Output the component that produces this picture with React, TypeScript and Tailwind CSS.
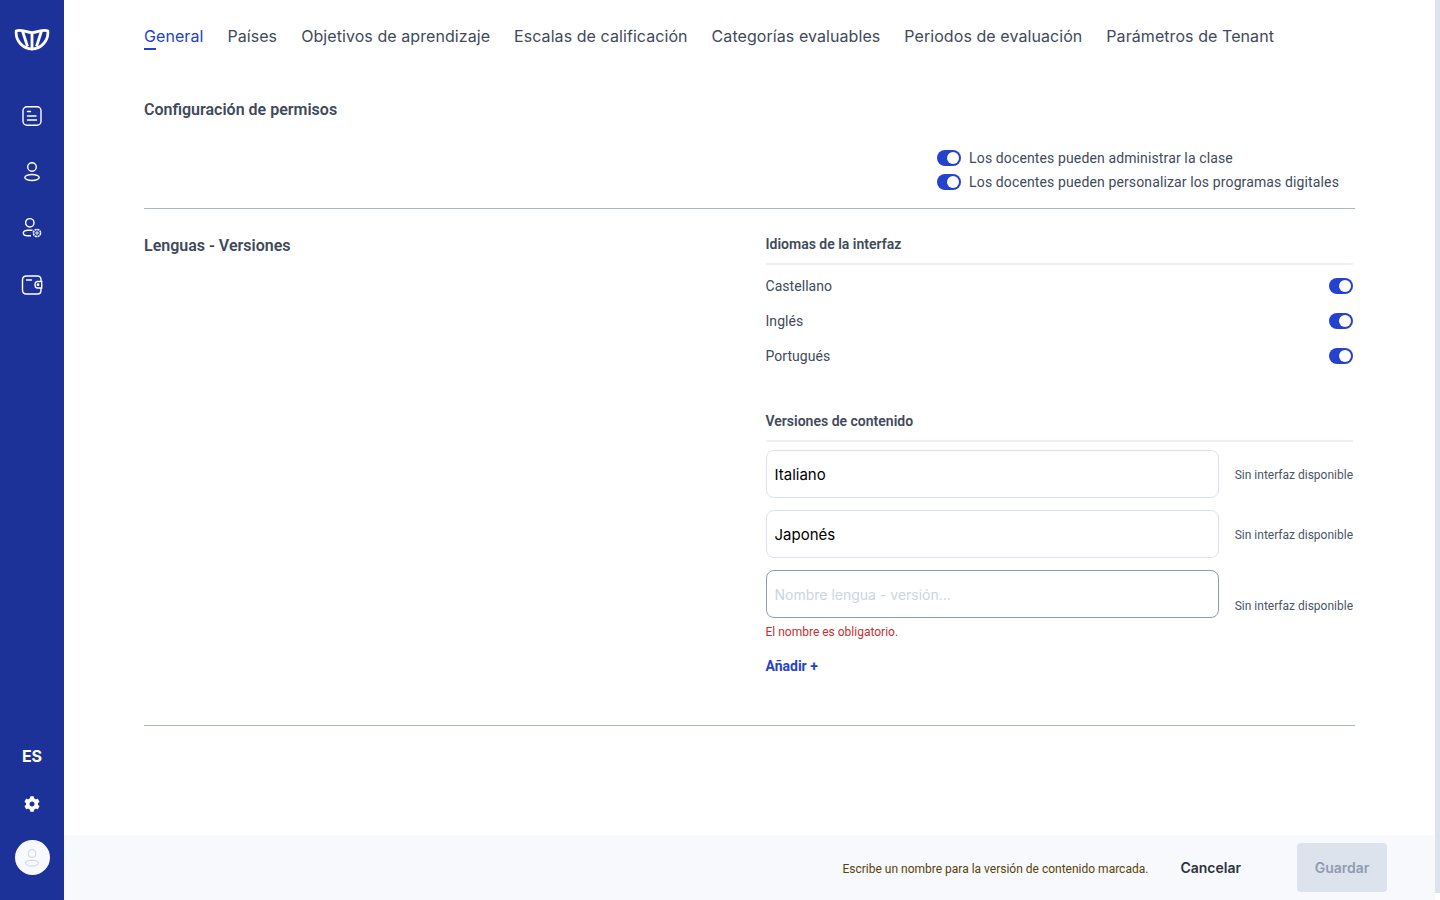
import React from "react";
import { FaCog } from "react-icons/fa";

const Toggle = () => (
  <span className="flex h-4 w-6 shrink-0 items-center justify-end rounded-full bg-[#2442cd] pr-[2px]">
    <span className="h-3 w-3 rounded-full bg-white" />
  </span>
);

const tabs = ["General", "Países", "Objetivos de aprendizaje", "Escalas de calificación", "Categorías evaluables", "Periodos de evaluación", "Parámetros de Tenant"];

const Logo = () => (
  <svg width="36" height="24" viewBox="0 0 36 24" fill="none" stroke="white" strokeWidth="2.8" strokeLinejoin="round">
    <path d="M2.3 3.8 C8 2.2 12.5 5.6 18 5.6 C23.5 5.6 28 2.2 33.7 3.8 C35 13.5 27 22 18 22 C9 22 1 13.5 2.3 3.8 Z" />
    <path d="M8.5 4 L13.5 19.5 M18 5.6 V22 M27.5 4 L22.5 19.5" />
  </svg>
);

const DocIcon = () => (
  <svg width="22" height="22" viewBox="0 0 22 22" fill="none" stroke="white" strokeWidth="1.4" strokeLinecap="round">
    <rect x="2" y="1.7" width="18" height="18.6" rx="4" />
    <path d="M6.5 6.5H9.5M6.5 11H15M6.5 15H15.5" />
  </svg>
);

const UserIcon = () => (
  <svg width="20" height="22" viewBox="0 0 20 22" fill="none" stroke="white" strokeWidth="1.4">
    <circle cx="10" cy="6" r="4.3" />
    <ellipse cx="10" cy="16.5" rx="7.2" ry="3" />
  </svg>
);

const UserGearIcon = () => (
  <svg width="22" height="22" viewBox="0 0 22 22" fill="none" stroke="white" strokeWidth="1.4">
    <circle cx="8.8" cy="5.8" r="4.2" />
    <path d="M11.5 13.2H7C4.5 13.2 2.3 14.3 2.3 16C2.3 17.7 4.5 18.8 7 18.8H10" />
    <circle cx="16" cy="16" r="3.6" strokeDasharray="2.2 0.6" strokeWidth="1.5" />
    <circle cx="16" cy="16" r="1.2" strokeWidth="1" />
  </svg>
);

const WalletIcon = () => (
  <svg className="mt-px" width="22" height="22" viewBox="0 0 22 22" fill="none" stroke="white" strokeWidth="1.4" strokeLinecap="round">
    <path d="M20 7V5.5C20 3.3 18.7 2 16.5 2H5.5C3 2 1.5 3.5 1.5 6V16C1.5 18.5 3 20 5.5 20H16.5C18.7 20 20 18.7 20 16.5V14.5" />
    <path d="M5.5 6H10.5" />
    <path d="M20.7 7.5H16.5C14.8 7.5 14 9 14 10.7C14 12.5 14.8 14 16.5 14H20.7Z" />
    <circle cx="17" cy="10.7" r="0.7" fill="white" />
  </svg>
);

const VersionRow = ({ value }: { value: string }) => (
  <div className="flex items-center justify-between">
    <div className="flex h-12 w-[453px] items-center rounded-lg border border-[#dde3ec] px-2 pt-[3px] font-['Inter',sans-serif] text-[15px] text-black">{value}</div>
    <span className="mt-[2px] text-xs text-[#4a5568]">Sin interfaz disponible</span>
  </div>
);

const LangRow = ({ label }: { label: string }) => (
  <div className="flex h-[35px] items-center justify-between">
    <span className="text-sm tracking-[0.05px] text-[#3f4a5a]">{label}</span>
    <Toggle />
  </div>
);

export default function App() {
  return (
    <div className="flex h-screen w-full overflow-hidden bg-white font-['Roboto',sans-serif]">
      <aside className="flex w-16 shrink-0 flex-col items-center bg-[#1d3299] pb-[25px] pt-[27px]">
        <Logo />
        <nav className="mt-[54px] flex flex-col items-center gap-[34px]">
          <DocIcon />
          <UserIcon />
          <UserGearIcon />
          <WalletIcon />
        </nav>
        <div className="mt-auto flex flex-col items-center">
          <span className="font-['Inter',sans-serif] text-base font-bold leading-6 text-white">ES</span>
          <FaCog className="mb-7 mt-7 h-4 w-4 text-white" />
          <span className="flex h-[35px] w-[35px] items-center justify-center rounded-full bg-[#f7f9fc]">
            <svg width="18" height="20" viewBox="0 0 18 20" fill="none" stroke="#c5cfdd" strokeWidth="0.9">
              <circle cx="9" cy="5.5" r="4" />
              <ellipse cx="9" cy="15.2" rx="6.5" ry="2.9" />
            </svg>
          </span>
        </div>
      </aside>

      <div className="flex min-w-0 flex-1 flex-col">
        <main className="flex-1 px-20">
          <div className="flex gap-6 pt-[26px] font-['Inter',sans-serif]">
            {tabs.map((t, i) => (
              <div key={t} className={`relative text-base leading-5 tracking-[0.07px] ${i === 0 ? "text-[#2442cd]" : "text-[#3f4a5a]"}`}>
                {t}
                {i === 0 && <span className="absolute left-0 top-[22px] h-[2px] w-3 bg-[#2442cd]" />}
              </div>
            ))}
          </div>

          <section className="border-b border-[#a9b4c6] pb-[16px]">
            <h2 className="mt-[54px] text-base font-semibold leading-5 text-[#3f4a5a]">Configuración de permisos</h2>
            <div className="mt-[27px] flex flex-col items-end pr-4">
              <div className="flex flex-col gap-[3px]">
                <label className="flex h-[21px] items-center gap-2 text-sm tracking-[0.125px] text-[#3f4a5a]"><Toggle />Los docentes pueden administrar la clase</label>
                <label className="flex h-[21px] items-center gap-2 text-sm tracking-[0.125px] text-[#3f4a5a]"><Toggle />Los docentes pueden personalizar los programas digitales</label>
              </div>
            </div>
          </section>

          <section className="flex h-[517px] border-b border-[#a9b4c6] pt-[26px]">
            <h2 className="mt-px w-[621.5px] shrink-0 text-base font-semibold leading-5 text-[#3f4a5a]">Lenguas - Versiones</h2>
            <div className="flex w-[587.5px] flex-col">
              <h3 className="border-b-2 border-[#edf1f7] pb-[10px] text-sm font-semibold leading-[18px] text-[#3f4a5a]">Idiomas de la interfaz</h3>
              <div className="mt-[3px] flex flex-col">
                <LangRow label="Castellano" />
                <LangRow label="Inglés" />
                <LangRow label="Portugués" />
              </div>
              <h3 className="mt-[39px] border-b-2 border-[#edf1f7] pb-[10px] text-sm font-semibold leading-[18px] text-[#3f4a5a]">Versiones de contenido</h3>
              <div className="mt-2 flex flex-col gap-3">
                <VersionRow value="Italiano" />
                <VersionRow value="Japonés" />
              </div>
              <div className="mt-3 flex items-start justify-between">
                <div className="flex h-12 w-[453px] items-center rounded-lg border border-[#8f9bb3] px-2 pt-px font-['Inter',sans-serif] text-sm text-[#cbd5e3]">Nombre lengua - versión...</div>
                <span className="mt-[28px] text-xs leading-4 text-[#4a5568]">Sin interfaz disponible</span>
              </div>
              <p className="mt-[6px] text-xs leading-4 text-[#c53030]">El nombre es obligatorio.</p>
              <span className="mt-[16px] text-sm font-bold leading-5 text-[#2442cd]">Añadir +</span>
            </div>
          </section>
        </main>

        <footer className="flex h-[65px] shrink-0 items-center justify-end bg-[#f7f9fc] pr-12">
          <span className="mt-[2px] text-xs text-[#5a4208]">Escribe un nombre para la versión de contenido marcada.</span>
          <span className="ml-8 font-['Inter',sans-serif] text-sm font-semibold text-[#2d3340]">Cancelar</span>
          <span className="ml-14 flex h-[49px] w-[90px] items-center justify-center rounded bg-[#dde3ec] font-['Inter',sans-serif] text-sm font-semibold text-[#8f9bb3]">Guardar</span>
        </footer>
      </div>

      <div className="h-[893px] w-[5px] shrink-0 bg-[#dde3ec]" />
    </div>
  );
}
